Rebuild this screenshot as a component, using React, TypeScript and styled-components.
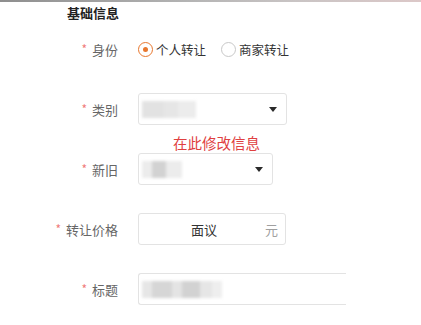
import styled, { createGlobalStyle } from "styled-components";

const GlobalStyle = createGlobalStyle`
  html, body {
    margin: 0;
    padding: 0;
    background: #ffffff;
  }
  body {
    font-family: "Noto Sans CJK SC", "Noto Sans", sans-serif;
  }
`;

const Page = styled.div`
  width: 421px;
  height: 325px;
  overflow: hidden;
  background: #ffffff;
`;

const TopStrip = styled.div`
  height: 2px;
  background: linear-gradient(90deg, #8e8e8e 0%, #b4b4b4 45%, #c9c4c4 70%, #dcc8c8 100%);
`;

const SectionTitle = styled.div`
  margin: 2px 0 0 67px;
  font-size: 13px;
  line-height: 18px;
  font-weight: 700;
  color: #222222;
`;

const Form = styled.div`
  display: flex;
  flex-direction: column;
  gap: 28px;
  margin-top: 11px;
`;

const FormItem = styled.div`
  display: flex;
  align-items: center;
  height: 32px;
`;

const Label = styled.div`
  width: 118px;
  padding-right: 20px;
  display: flex;
  justify-content: flex-end;
  align-items: center;
  font-size: 13px;
  color: #666666;
  flex-shrink: 0;
`;

const Star = styled.span`
  color: #f07c7c;
  font-size: 12px;
  margin-right: 5px;
  position: relative;
  top: -1px;
`;

const RadioGroup = styled.div`
  display: flex;
  align-items: center;
  gap: 15px;
`;

const RadioOption = styled.label`
  display: flex;
  align-items: center;
  gap: 3px;
  font-size: 12.5px;
  color: #333333;
`;

const RadioCircle = styled.span<{ $checked?: boolean }>`
  width: 15px;
  height: 15px;
  box-sizing: border-box;
  border-radius: 50%;
  border: 1px solid ${(p) => (p.$checked ? "#e8772e" : "#c8c8c8")};
  display: flex;
  align-items: center;
  justify-content: center;
  &::after {
    content: "";
    width: 5px;
    height: 5px;
    border-radius: 50%;
    background: ${(p) => (p.$checked ? "#e8772e" : "transparent")};
  }
`;

const FieldWrap = styled.div`
  position: relative;
`;

const Select = styled.div<{ $width: number }>`
  width: ${(p) => p.$width}px;
  height: 32px;
  box-sizing: border-box;
  border: 1px solid #e3e3e3;
  border-radius: 3px;
  display: flex;
  align-items: center;
  justify-content: space-between;
  padding: 0 9px 0 3px;
`;

const Arrow = styled.span`
  width: 0;
  height: 0;
  border-left: 4.5px solid transparent;
  border-right: 4.5px solid transparent;
  border-top: 5px solid #2a2a2a;
`;

const Blurred = styled.div`
  display: flex;
  filter: blur(1.6px);
`;

const Chunk = styled.span<{ $w: number; $shade: string }>`
  display: block;
  width: ${(p) => p.$w}px;
  height: 17px;
  background: ${(p) => p.$shade};
`;

const Hint = styled.div`
  position: absolute;
  left: 35px;
  top: 42px;
  font-size: 14.5px;
  line-height: 16px;
  color: #e0403f;
  white-space: nowrap;
`;

const PriceInput = styled.div`
  width: 148px;
  height: 32px;
  box-sizing: border-box;
  border: 1px solid #e3e3e3;
  border-radius: 3px;
  display: flex;
  align-items: center;
  padding: 0 7px 0 0;
`;

const PriceValue = styled.span`
  flex: 1;
  padding-left: 4px;
  text-align: center;
  font-size: 13px;
  color: #333333;
`;

const Unit = styled.span`
  font-size: 13px;
  color: #a0a0a0;
`;

const TitleInput = styled.div`
  width: 208px;
  height: 32px;
  box-sizing: border-box;
  border: 1px solid #e3e3e3;
  border-right: none;
  border-radius: 3px 0 0 3px;
  display: flex;
  align-items: center;
  padding-left: 3px;
`;

type ChunkSpec = [number, string];

const BlurText = ({ chunks }: { chunks: ChunkSpec[] }) => (
  <Blurred>
    {chunks.map(([w, shade], i) => (
      <Chunk key={i} $w={w} $shade={shade} />
    ))}
  </Blurred>
);

const FieldLabel = ({ text }: { text: string }) => (
  <Label>
    <Star>*</Star>
    {text}
  </Label>
);

export default function App() {
  return (
    <Page>
      <GlobalStyle />
      <TopStrip />
      <SectionTitle>基础信息</SectionTitle>
      <Form>
        <FormItem>
          <FieldLabel text="身份" />
          <RadioGroup>
            <RadioOption>
              <RadioCircle $checked />
              个人转让
            </RadioOption>
            <RadioOption>
              <RadioCircle />
              商家转让
            </RadioOption>
          </RadioGroup>
        </FormItem>

        <FormItem>
          <FieldLabel text="类别" />
          <FieldWrap>
            <Select $width={149}>
              <BlurText
                chunks={[
                  [22, "#e2e2e2"],
                  [14, "#e6e6e6"],
                  [18, "#ececec"],
                ]}
              />
              <Arrow />
            </Select>
            <Hint>在此修改信息</Hint>
          </FieldWrap>
        </FormItem>

        <FormItem>
          <FieldLabel text="新旧" />
          <Select $width={135}>
            <BlurText
              chunks={[
                [10, "#ececec"],
                [14, "#d2d2d2"],
                [16, "#ececec"],
              ]}
            />
            <Arrow />
          </Select>
        </FormItem>

        <FormItem>
          <FieldLabel text="转让价格" />
          <PriceInput>
            <PriceValue>面议</PriceValue>
            <Unit>元</Unit>
          </PriceInput>
        </FormItem>

        <FormItem>
          <FieldLabel text="标题" />
          <TitleInput>
            <BlurText
              chunks={[
                [10, "#e6e6e6"],
                [20, "#d6d6d6"],
                [10, "#e4e4e4"],
                [18, "#d2d2d2"],
                [12, "#e6e6e6"],
                [10, "#eeeeee"],
              ]}
            />
          </TitleInput>
        </FormItem>
      </Form>
    </Page>
  );
}
